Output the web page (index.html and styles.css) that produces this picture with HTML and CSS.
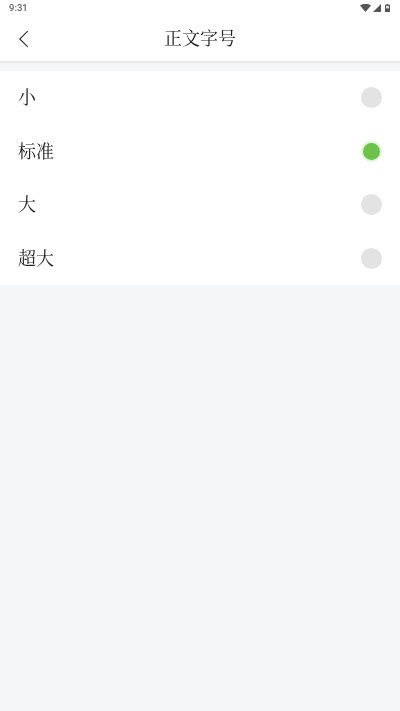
FILE: index.html
```html
<!DOCTYPE html>
<html lang="zh-CN">
<head>
<meta charset="utf-8">
<title>正文字号</title>
<link rel="stylesheet" href="styles.css">
</head>
<body>
<div class="page">
  <div class="status">
    <span class="time">9:31</span>
    <span class="status-icons">
      <svg class="wifi" viewBox="0 0 11 8"><path d="M0 1.4C1.6.4 3.5 0 5.5 0s3.9.4 5.5 1.4L5.5 8z"/></svg>
      <svg class="signal" viewBox="0 0 8 8"><path d="M8 0v8H0z"/></svg>
      <svg class="battery" viewBox="0 0 5 8"><path d="M1.6 0h1.8v.8H5V8H0V.8h1.6z"/><rect class="battery-empty" x="1" y="1.8" width="3" height="2.6"/></svg>
    </span>
  </div>
  <header class="bar">
    <svg class="back" viewBox="0 0 10 17"><path d="M9 1 1.5 8.5 9 16"/></svg>
    <h1 class="title">正文字号</h1>
  </header>
  <ul class="list">
    <li class="row"><span class="label">小</span><span class="radio"></span></li>
    <li class="row"><span class="label">标准</span><span class="radio on"></span></li>
    <li class="row"><span class="label">大</span><span class="radio"></span></li>
    <li class="row"><span class="label">超大</span><span class="radio"></span></li>
  </ul>
</div>
</body>
</html>
```
FILE: styles.css
```css
html, body { margin: 0; padding: 0; height: 100%; }
body { background: #f5f6f8; font-family: "Noto Serif CJK SC", "Liberation Serif", "Noto Sans CJK SC", serif; color: #222; overflow: hidden; }
.page { display: flex; flex-direction: column; height: 711px; }
.status { height: 15px; background: #fff; display: flex; justify-content: space-between; align-items: center; padding: 0 10px 0 9px; }
.time { font: 500 9.5px/15px Roboto, sans-serif; color: #666; will-change: transform; }
.status-icons { display: flex; align-items: center; gap: 2px; }
.status-icons svg { display: block; height: 8px; fill: #555; }
.wifi { width: 11px; }
.signal { width: 8px; }
.battery { width: 5px; margin-left: 2px; }
.battery-empty { fill: #ddd; }
.bar { height: 46px; background: #fff; position: relative; display: flex; align-items: center; justify-content: center; border-bottom: 2px solid #e8e8e8; }
.back { position: absolute; left: 18px; top: 15px; width: 11px; height: 18px; fill: none; stroke: #333; stroke-width: 1.1; }
.title { margin: 0 0 2px; font-size: 18px; font-weight: 400; line-height: 44px; will-change: transform; }
.list { list-style: none; margin: 8px 0 0; padding: 0 18px; background: #fff; height: 214px; display: grid; grid-template-rows: repeat(4, 1fr); }
.row { display: flex; align-items: center; justify-content: space-between; }
.label { font-size: 18px; line-height: 24px; margin-bottom: 3px; will-change: transform; }
.radio { width: 21px; height: 21px; border-radius: 50%; background: #e3e3e3; box-sizing: border-box; }
.radio.on { background: #6cc24a; border: 2px solid #e2f3da; }
```
